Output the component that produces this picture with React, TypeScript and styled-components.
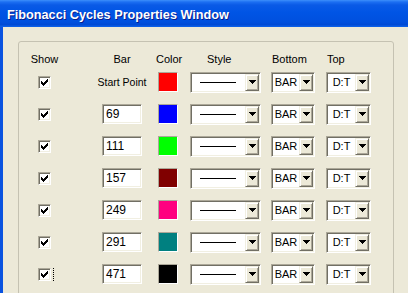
import React from "react";
import styled, { createGlobalStyle } from "styled-components";

const GlobalStyle = createGlobalStyle`
  html, body {
    margin: 0;
    padding: 0;
    overflow: hidden;
    background: #ece9d8;
  }
  * {
    box-sizing: border-box;
  }
`;

const COLS = [
  { w: 29, ml: 0 },
  { w: 48, ml: 39 },
  { w: 24, ml: 10 },
  { w: 71, ml: 10 },
  { w: 44, ml: 10 },
  { w: 45, ml: 11 },
];

const HEADERS = [
  { label: "Show", align: "center", pl: 0 },
  { label: "Bar", align: "center", pl: 0 },
  { label: "Color", align: "center", pl: 0 },
  { label: "Style", align: "left", pl: 17 },
  { label: "Bottom", align: "left", pl: 1 },
  { label: "Top", align: "left", pl: 1 },
];

const ROWS = [
  { bar: "Start Point", color: "#ff0000" },
  { bar: "69", color: "#0000ff" },
  { bar: "111", color: "#00ff00" },
  { bar: "157", color: "#800000" },
  { bar: "249", color: "#ff0080" },
  { bar: "291", color: "#008080" },
  { bar: "471", color: "#000000", focused: true },
];

const App = () => {
  return (
    <Window>
      <GlobalStyle />
      <TitleBar>
        <Title>Fibonacci Cycles Properties Window</Title>
      </TitleBar>
      <Client>
        <GroupBox>
          <HeaderRow>
            {HEADERS.map((h, idx) => (
              <HeaderCell key={h.label} $w={COLS[idx].w} $ml={COLS[idx].ml} $align={h.align} $pl={h.pl}>
                {h.label}
              </HeaderCell>
            ))}
          </HeaderRow>
          {ROWS.map((row) => (
            <Row key={row.bar}>
              <ShowCell $w={COLS[0].w} $ml={COLS[0].ml}>
                <CheckBox>
                  <CheckMark />
                </CheckBox>
                {row.focused && <FocusMark />}
              </ShowCell>
              <Cell $w={COLS[1].w} $ml={COLS[1].ml}>
                {row.bar === "Start Point" ? <Label>{row.bar}</Label> : <BarInput>{row.bar}</BarInput>}
              </Cell>
              <Cell $w={COLS[2].w} $ml={COLS[2].ml}>
                <Swatch $color={row.color} />
              </Cell>
              <Cell $w={COLS[3].w} $ml={COLS[3].ml}>
                <Combo>
                  <ComboField>
                    <LineSample />
                  </ComboField>
                  <DropButton>
                    <Arrow />
                  </DropButton>
                </Combo>
              </Cell>
              <Cell $w={COLS[4].w} $ml={COLS[4].ml}>
                <Combo>
                  <ComboField>BAR</ComboField>
                  <DropButton>
                    <Arrow />
                  </DropButton>
                </Combo>
              </Cell>
              <Cell $w={COLS[5].w} $ml={COLS[5].ml}>
                <Combo>
                  <ComboField>D:T</ComboField>
                  <DropButton>
                    <Arrow />
                  </DropButton>
                </Combo>
              </Cell>
            </Row>
          ))}
        </GroupBox>
      </Client>
    </Window>
  );
};

const CheckMark = () => (
  <svg width="7" height="7" viewBox="0 0 7 7" shapeRendering="crispEdges">
    {[2, 3, 4, 3, 2, 1, 0].map((y, x) => (
      <rect key={x} x={x} y={y} width="1" height="3" fill="#000" />
    ))}
  </svg>
);

const Arrow = () => (
  <svg width="7" height="4" viewBox="0 0 7 4" shapeRendering="crispEdges">
    <rect x="0" y="0" width="7" height="1" fill="#000" />
    <rect x="1" y="1" width="5" height="1" fill="#000" />
    <rect x="2" y="2" width="3" height="1" fill="#000" />
    <rect x="3" y="3" width="1" height="1" fill="#000" />
  </svg>
);

export default App;

const Window = styled.div`
  width: 408px;
  height: 293px;
  background: #0a53e0;
  font-family: "Liberation Sans", Arial, sans-serif;
  font-size: 11px;
  color: #000;
`;

const TitleBar = styled.div`
  height: 27px;
  display: flex;
  align-items: center;
  padding-left: 7px;
  background: linear-gradient(
    to bottom,
    #3d8ffb 0px,
    #1c6ff2 2px,
    #0a5ae6 5px,
    #0055e5 12px,
    #0050de 22px,
    #0049d4 25px,
    #0c5ee6 26px,
    #0c5ee6 27px
  );
`;

const Title = styled.div`
  color: #fff;
  font-weight: bold;
  font-size: 12.7px;
  padding-top: 2px;
  text-shadow: 1px 1px 0 #0a1e8c;
`;

const Client = styled.div`
  margin-left: 3px;
  height: 266px;
  background: #ece9d8;
  padding: 14px 0 0 15px;
  overflow: hidden;
`;

const GroupBox = styled.div`
  width: 376px;
  height: 300px;
  border: 1px solid #c5c2b2;
  border-radius: 3px;
  padding: 10px 0 0 11px;
`;

const HeaderRow = styled.div`
  display: flex;
  height: 14px;
  align-items: center;
`;

const HeaderCell = styled.div<{ $w: number; $ml: number; $align: string; $pl: number }>`
  width: ${({ $w }) => $w}px;
  margin-left: ${({ $ml }) => $ml}px;
  text-align: ${({ $align }) => $align};
  padding-left: ${({ $pl }) => $pl}px;
  white-space: nowrap;
  line-height: 14px;
`;

const Row = styled.div`
  display: flex;
  height: 32px;
  align-items: center;
`;

const Cell = styled.div<{ $w: number; $ml: number }>`
  width: ${({ $w }) => $w}px;
  margin-left: ${({ $ml }) => $ml}px;
  display: flex;
  justify-content: center;
  align-items: center;
  flex-shrink: 0;
`;

const ShowCell = styled(Cell)`
  justify-content: flex-start;
  padding-left: 8px;
`;

const CheckBox = styled.div`
  width: 13px;
  height: 13px;
  background: #fff;
  border-style: solid;
  border-width: 1px;
  border-color: #aca899 #fff #fff #aca899;
  box-shadow: inset 1px 1px 0 #716f64, inset -1px -1px 0 #f1efe2;
  display: flex;
  align-items: center;
  justify-content: center;
  padding-top: 1px;
`;

const FocusMark = styled.span`
  width: 1px;
  height: 13px;
  margin-left: 2px;
  border-left: 1px dotted #000;
`;

const Label = styled.div`
  white-space: nowrap;
  line-height: 14px;
  font-size: 10.5px;
`;

const BarInput = styled.div`
  width: 40px;
  height: 20px;
  background: #fff;
  border-style: solid;
  border-width: 1px;
  border-color: #aca899 #fff #fff #aca899;
  box-shadow: inset 1px 1px 0 #716f64, inset -1px -1px 0 #f1efe2;
  padding: 0 0 0 3px;
  line-height: 18px;
  font-size: 12px;
`;

const Swatch = styled.div<{ $color: string }>`
  width: 20px;
  height: 20px;
  background: ${({ $color }) => $color};
  border-style: solid;
  border-width: 1px;
  border-color: #aca899 #fff #fff #aca899;
`;

const Combo = styled.div`
  width: 100%;
  height: 21px;
  display: flex;
  background: #fff;
  border-style: solid;
  border-width: 1px;
  border-color: #aca899 #fff #fff #aca899;
  box-shadow: inset 1px 1px 0 #716f64, inset -1px -1px 0 #f1efe2;
  padding: 1px;
`;

const ComboField = styled.div`
  flex: 1;
  display: flex;
  align-items: center;
  justify-content: center;
  font-size: 11px;
  line-height: 17px;
  white-space: nowrap;
`;

const LineSample = styled.div`
  width: 36px;
  height: 1px;
  background: #000;
  margin-right: 1px;
`;

const DropButton = styled.div`
  width: 14px;
  height: 17px;
  background: #ece9d8;
  border-style: solid;
  border-width: 1px;
  border-color: #f1efe2 #716f64 #716f64 #f1efe2;
  box-shadow: inset 1px 1px 0 #fff, inset -1px -1px 0 #aca899;
  display: flex;
  align-items: center;
  justify-content: center;
`;
